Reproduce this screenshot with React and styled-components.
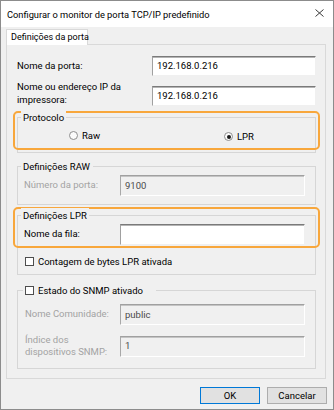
import React from 'react';
import styled, { createGlobalStyle } from 'styled-components';

const Global = createGlobalStyle`
  html, body { margin: 0; padding: 0; background: #ffffff; }
  body {
    font-family: Roboto, "Noto Sans", sans-serif;
    font-size: 9.5px;
    color: #000;
  }
  * { box-sizing: border-box; }
`;

const Window = styled.div`
  width: 334px;
  height: 410px;
  border: 1px solid #8c8c8c;
  background: #f0f0f0;
  display: flex;
  flex-direction: column;
  overflow: hidden;
`;

const TitleBar = styled.div`
  flex: 0 0 26px;
  height: 26px;
  background: #ffffff;
  display: flex;
  align-items: center;
  justify-content: space-between;
  padding: 0 9px 0 6px;
  font-size: 9.3px;
  color: #000;
`;

const CloseBtn = styled.span`
  display: flex;
  margin-bottom: 2px;
`;

const Body = styled.div`
  flex: 1;
  display: flex;
  flex-direction: column;
  padding: 2px 6px 0 5px;
`;

const TabStrip = styled.div`
  display: flex;
  position: relative;
  z-index: 1;
  margin-bottom: -1px;
`;

const Tab = styled.div`
  width: 82px;
  height: 16px;
  padding-left: 4px;
  background: #ffffff;
  border: 1px solid #d9d9d9;
  border-bottom: none;
  line-height: 14px;
  font-size: 9px;
  white-space: nowrap;
`;

const Panel = styled.div`
  border: 1px solid #d9d9d9;
  background: #f0f0f0;
  margin-right: 1px;
  padding: 11px 9px 9px 10px;
  display: flex;
  flex-direction: column;
`;

const Row = styled.div`
  display: flex;
  justify-content: space-between;
  align-items: ${p => p.$align || 'center'};
  height: ${p => p.$h}px;
  margin-top: ${p => p.$mt || 0}px;
`;

const Label = styled.div`
  line-height: 12.5px;
  color: ${p => (p.$disabled ? '#a3a3a3' : '#000')};
  white-space: nowrap;
  margin-top: ${p => p.$shift || 0}px;
`;

const TextBox = styled.div`
  width: ${p => p.$w}px;
  height: ${p => p.$h}px;
  flex: 0 0 auto;
  background: ${p => (p.$disabled ? '#f0f0f0' : '#ffffff')};
  border-top: 1px solid ${p => (p.$disabled ? '#a0a0a0' : '#7a7a7a')};
  border-left: 1px solid ${p => (p.$disabled ? '#a8a8a8' : '#a0a0a0')};
  border-right: 1px solid ${p => (p.$disabled ? '#ffffff' : '#f0f0f0')};
  border-bottom: 1px solid ${p => (p.$disabled ? '#ffffff' : '#f0f0f0')};
  box-shadow: inset 0 1px 0 ${p => (p.$disabled ? '#c4c4c4' : '#b4b4b4')};
  padding: ${p => (p.$top ? '3px' : '0')} 0 0 4px;
  display: flex;
  align-items: ${p => (p.$top ? 'flex-start' : 'center')};
  color: ${p => (p.$disabled ? '#4a4a4a' : '#000')};
  line-height: 12px;
`;

const Group = styled.div`
  position: relative;
  border: 1px solid #d6d6d6;
  margin-top: ${p => p.$mt}px;
  padding: ${p => p.$pad};
  display: flex;
  flex-direction: column;
`;

const Legend = styled.div`
  position: absolute;
  top: -8px;
  left: ${p => p.$left || 3}px;
  padding: 0 ${p => p.$pr || 2}px 0 2px;
  background: #f0f0f0;
  line-height: 15px;
  display: flex;
  align-items: center;
  gap: 4px;
  white-space: nowrap;
`;

const Highlight = styled.div`
  position: absolute;
  pointer-events: none;
  left: -5px;
  right: -5px;
  top: ${p => p.$top}px;
  height: ${p => p.$h}px;
  border: 2px solid #f8a73c;
  border-radius: 5px;
`;

const RadioRow = styled.div`
  height: 34px;
  display: flex;
  align-items: center;
  padding-left: 51px;
`;

const RadioItem = styled.div`
  display: flex;
  align-items: center;
  gap: 4px;
  width: ${p => (p.$w ? `${p.$w}px` : 'auto')};
  margin-top: ${p => p.$mt || 0}px;
`;

const RadioCircle = styled.span`
  width: 9px;
  height: 9px;
  border-radius: 50%;
  border: 1px solid #8e8e8e;
  background: #fbfbfb;
  display: inline-flex;
  align-items: center;
  justify-content: center;
  &::after {
    content: '';
    width: 4px;
    height: 4px;
    border-radius: 50%;
    background: #1a1a1a;
    display: ${p => (p.$checked ? 'block' : 'none')};
  }
`;

const CheckBox = styled.span`
  width: 9px;
  height: 9px;
  flex: 0 0 9px;
  border: 1px solid #4d4d4d;
  background: #ffffff;
`;

const CheckRow = styled.div`
  height: 16px;
  margin-top: 8px;
  padding-left: 1px;
  display: flex;
  align-items: center;
  gap: 4px;
`;

const ButtonRow = styled.div`
  display: flex;
  justify-content: flex-end;
  gap: 7px;
  margin-top: 8px;
`;

const Button = styled.div`
  width: 60px;
  height: 17px;
  background: #e1e1e1;
  border: 1px solid ${p => (p.$default ? '#0078d7' : '#adadad')};
  display: flex;
  align-items: center;
  justify-content: center;
  line-height: 12px;
`;

const CloseIcon = () => (
  <svg width="9" height="8" viewBox="0 0 9 8">
    <path d="M0.5 0.5L8.5 7.5M8.5 0.5L0.5 7.5" stroke="#3a3a3a" strokeWidth="1" fill="none" />
  </svg>
);

export default function App() {
  return (
    <>
      <Global />
      <Window>
        <TitleBar>
          <span>Configurar o monitor de porta TCP/IP predefinido</span>
          <CloseBtn><CloseIcon /></CloseBtn>
        </TitleBar>
        <Body>
          <TabStrip>
            <Tab>Definições da porta</Tab>
          </TabStrip>
          <Panel>
            <Row $h={20}>
              <Label>Nome da porta:</Label>
              <TextBox $w={164} $h={20}>192.168.0.216</TextBox>
            </Row>
            <Row $h={20} $mt={10} $align="flex-end">
              <Label>Nome ou endereço IP da<br />impressora:</Label>
              <TextBox $w={164} $h={20}>192.168.0.216</TextBox>
            </Row>

            <Group $mt={11} $pad="0">
              <Highlight $top={-7} $h={39} />
              <Legend>Protocolo</Legend>
              <RadioRow>
                <RadioItem $w={155}>
                  <RadioCircle />
                  <span>Raw</span>
                </RadioItem>
                <RadioItem $mt={3}>
                  <RadioCircle $checked />
                  <span>LPR</span>
                </RadioItem>
              </RadioRow>
            </Group>

            <Group $mt={13} $pad="8px 10px 8px 6px">
              <Legend $pr={3}>Definições RAW</Legend>
              <Row $h={21}>
                <Label $disabled>Número da porta:</Label>
                <TextBox $w={185} $h={21} $disabled>9100</TextBox>
              </Row>
            </Group>

            <Group $mt={10} $pad="8px 10px 5px 6px">
              <Highlight $top={-9} $h={41} />
              <Legend>Definições LPR</Legend>
              <Row $h={21}>
                <Label>Nome da fila:</Label>
                <TextBox $w={185} $h={21} />
              </Row>
              <CheckRow>
                <CheckBox />
                <span>Contagem de bytes LPR ativada</span>
              </CheckRow>
            </Group>

            <Group $mt={15} $pad="13px 10px 11px 7px">
              <Legend $left={5} $pr={13}>
                <CheckBox />
                <span>Estado do SNMP ativado</span>
              </Legend>
              <Row $h={21}>
                <Label $disabled>Nome Comunidade:</Label>
                <TextBox $w={185} $h={21} $disabled>public</TextBox>
              </Row>
              <Row $h={21} $mt={11}>
                <Label $disabled $shift={-1}>Índice dos<br />dispositivos SNMP:</Label>
                <TextBox $w={185} $h={21} $disabled $top>1</TextBox>
              </Row>
            </Group>
          </Panel>
          <ButtonRow>
            <Button $default>OK</Button>
            <Button>Cancelar</Button>
          </ButtonRow>
        </Body>
      </Window>
    </>
  );
}
